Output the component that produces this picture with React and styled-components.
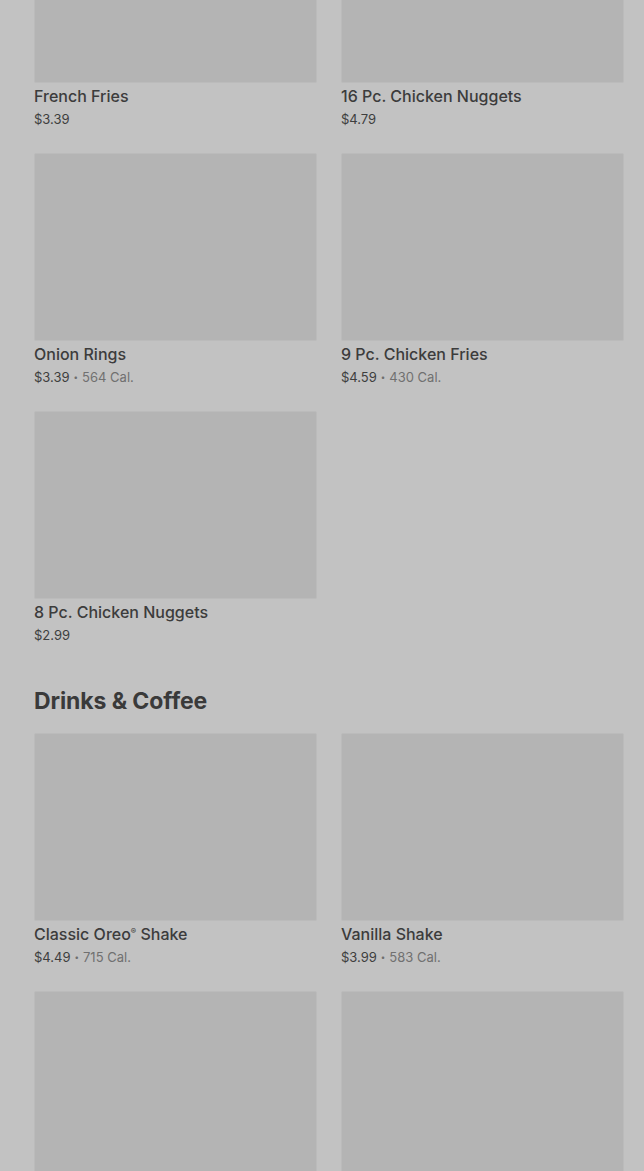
import React from 'react'
import styled, { createGlobalStyle } from 'styled-components'

const Global = createGlobalStyle`
  html, body {
    margin: 0;
    padding: 0;
    background: #c2c2c2;
    overflow: hidden;
  }
  body {
    font-family: Inter, "Noto Sans", sans-serif;
  }
`

const Page = styled.div`
  width: 644px;
  height: 1171px;
  overflow: hidden;
  background: #c2c2c2;
`

const Inner = styled.div`
  margin-top: -105px;
  padding: 0 20px 0 34px;
`

const Section = styled.section`
  margin-bottom: 43px;
`

const Heading = styled.h2`
  margin: 0 0 17px;
  font-size: 23px;
  line-height: 29px;
  font-weight: 700;
  color: #3a3a3a;
  letter-spacing: -0.1px;
`

const Grid = styled.div`
  display: grid;
  grid-template-columns: 283px 283px;
  column-gap: 24px;
  row-gap: 25px;
`

const Card = styled.div`
  display: flex;
  flex-direction: column;
`

const Thumb = styled.div`
  height: 188px;
  background: #b4b4b4;
  border: 1px solid #bbbbbb;
  box-sizing: border-box;
  border-radius: 2px;
`

const Name = styled.div`
  margin-top: 3px;
  font-size: 16px;
  line-height: 20px;
  font-weight: 500;
  color: #3c3c3c;
  letter-spacing: 0;

  sup {
    font-size: 8px;
    line-height: 0;
    vertical-align: 6px;
  }
`

const Meta = styled.div`
  margin-top: 4px;
  font-size: 13px;
  line-height: 18px;
  color: #3e3e3e;
  display: flex;
  align-items: center;
`

const Dot = styled.span`
  margin: 0 4px;
  font-size: 8px;
  color: #6e6e6e;
`

const Cal = styled.span`
  color: #707070;
`

const sides = [
  { name: 'French Fries', price: '$3.39' },
  { name: '16 Pc. Chicken Nuggets', price: '$4.79' },
  { name: 'Onion Rings', price: '$3.39', cal: '564 Cal.' },
  { name: '9 Pc. Chicken Fries', price: '$4.59', cal: '430 Cal.' },
  { name: '8 Pc. Chicken Nuggets', price: '$2.99' },
]

const drinks = [
  { name: <>Classic Oreo<sup>®</sup> Shake</>, price: '$4.49', cal: '715 Cal.' },
  { name: 'Vanilla Shake', price: '$3.99', cal: '583 Cal.' },
  { name: '', price: '' },
  { name: '', price: '' },
]

const Item = ({ item }) => (
  <Card>
    <Thumb />
    <Name>{item.name}</Name>
    <Meta>
      {item.price}
      {item.cal && (
        <>
          <Dot>•</Dot>
          <Cal>{item.cal}</Cal>
        </>
      )}
    </Meta>
  </Card>
)

export default function App() {
  return (
    <Page>
      <Global />
      <Inner>
        <Section>
          <Grid>
            {sides.map((s, i) => <Item key={i} item={s} />)}
          </Grid>
        </Section>
        <Section>
          <Heading>Drinks &amp; Coffee</Heading>
          <Grid>
            {drinks.map((s, i) => <Item key={i} item={s} />)}
          </Grid>
        </Section>
      </Inner>
    </Page>
  )
}
